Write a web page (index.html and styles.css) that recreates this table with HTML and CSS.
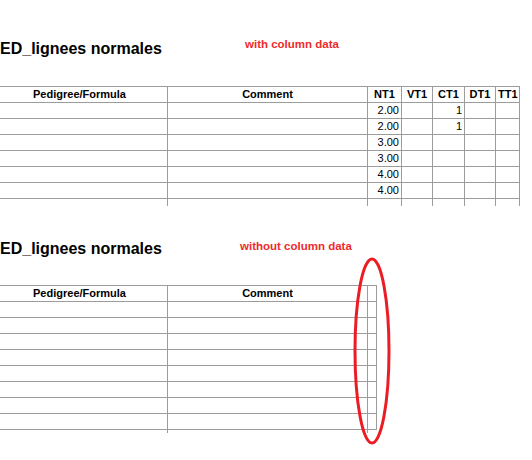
FILE: index.html
```html
<!DOCTYPE html>
<html>
<head>
<meta charset="utf-8">
<link rel="stylesheet" href="styles.css">
</head>
<body>
<section class="block block-first">
  <div class="head">
    <div class="title">ED_lignees normales</div>
    <div class="note">with column data</div>
  </div>
  <div class="sheet sheet-data">
    <div class="c h">Pedigree/Formula</div><div class="c h">Comment</div><div class="c h">NT1</div><div class="c h">VT1</div><div class="c h">CT1</div><div class="c h">DT1</div><div class="c h">TT1</div>
    <div class="c"></div><div class="c"></div><div class="c n">2.00</div><div class="c"></div><div class="c n">1</div><div class="c"></div><div class="c"></div>
    <div class="c"></div><div class="c"></div><div class="c n">2.00</div><div class="c"></div><div class="c n">1</div><div class="c"></div><div class="c"></div>
    <div class="c"></div><div class="c"></div><div class="c n">3.00</div><div class="c"></div><div class="c"></div><div class="c"></div><div class="c"></div>
    <div class="c"></div><div class="c"></div><div class="c n">3.00</div><div class="c"></div><div class="c"></div><div class="c"></div><div class="c"></div>
    <div class="c"></div><div class="c"></div><div class="c n">4.00</div><div class="c"></div><div class="c"></div><div class="c"></div><div class="c"></div>
    <div class="c"></div><div class="c"></div><div class="c n">4.00</div><div class="c"></div><div class="c"></div><div class="c"></div><div class="c"></div>
    <div class="t"></div><div class="t"></div><div class="t"></div><div class="t"></div><div class="t"></div><div class="t"></div><div class="t"></div>
  </div>
</section>
<section class="block block-second">
  <div class="head">
    <div class="title">ED_lignees normales</div>
    <div class="note note-second">without column data</div>
  </div>
  <div class="sheet sheet-empty">
    <div class="c h">Pedigree/Formula</div><div class="c h">Comment</div><div class="c h"></div>
    <div class="c"></div><div class="c"></div><div class="c"></div>
    <div class="c"></div><div class="c"></div><div class="c"></div>
    <div class="c"></div><div class="c"></div><div class="c"></div>
    <div class="c"></div><div class="c"></div><div class="c"></div>
    <div class="c"></div><div class="c"></div><div class="c"></div>
    <div class="c"></div><div class="c"></div><div class="c"></div>
    <div class="c"></div><div class="c"></div><div class="c"></div>
    <div class="c"></div><div class="c"></div><div class="c"></div>
    <div class="t t-short"></div><div class="t t-short"></div><div class="t t-short t-none"></div>
  </div>
</section>
<svg class="ring" width="40" height="190" viewBox="0 0 40 190">
  <ellipse cx="19" cy="94" rx="17" ry="92" fill="none" stroke="#ec1c24" stroke-width="3"/>
</svg>
</body>
</html>
```
FILE: styles.css
```css
html, body {
  margin: 0;
  padding: 0;
  background: #ffffff;
}
body {
  font-family: "Liberation Sans", Arial, sans-serif;
  color: #000;
  position: relative;
  width: 532px;
  height: 460px;
  overflow: hidden;
}
.block-first {
  padding-top: 40px;
}
.block-second {
  padding-top: 34px;
}
.head {
  display: grid;
  grid-template-columns: 245px auto;
  height: 18px;
}
.block-second .head {
  grid-template-columns: 240px auto;
}
.title {
  font-weight: bold;
  font-size: 16px;
  line-height: 18px;
  white-space: nowrap;
}
.note {
  color: #ee2b2b;
  font-weight: bold;
  font-size: 11.5px;
  line-height: 13px;
  margin-top: -2px;
  white-space: nowrap;
}
.note-second {
  margin-top: 0;
}
.sheet {
  display: grid;
  width: max-content;
  margin-left: -9px;
  border-top: 1px solid #9c9c9c;
  border-left: 1px solid #9c9c9c;
}
.sheet-data {
  margin-top: 28px;
  grid-template-columns: 176px 200px 34px 31px 32px 31px 24px;
}
.sheet-empty {
  margin-top: 27px;
  grid-template-columns: 176px 200px 9px;
}
.c {
  box-sizing: border-box;
  height: 16px;
  border-right: 1px solid #9c9c9c;
  border-bottom: 1px solid #9c9c9c;
  font-size: 11px;
  line-height: 15px;
  padding: 0 2px;
  white-space: nowrap;
  overflow: hidden;
}
.h {
  font-weight: bold;
  text-align: center;
}
.n {
  text-align: right;
  padding-right: 2px;
}
.t {
  box-sizing: border-box;
  height: 7px;
  border-right: 1px solid #9c9c9c;
}
.t-short {
  height: 3px;
}
.t-none {
  border-right: none;
}
.ring {
  position: absolute;
  left: 353px;
  top: 257px;
}
```
